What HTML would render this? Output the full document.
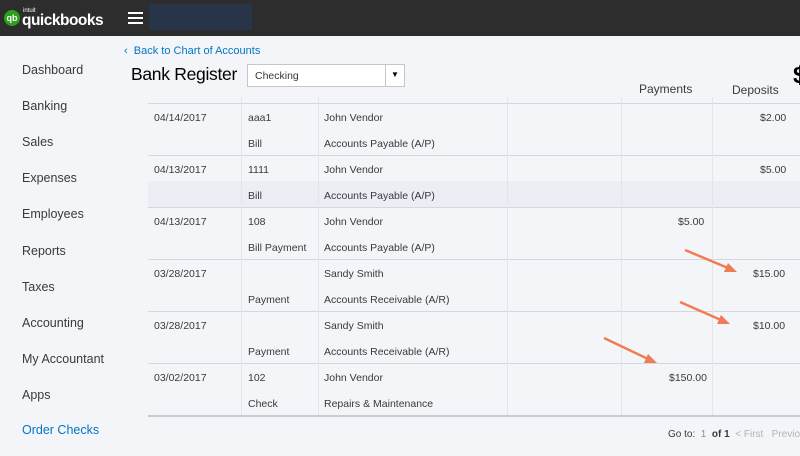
<html><head><style>
body{margin:0;width:800px;height:456px;overflow:hidden;background:#f4f5f8;font-family:"Liberation Sans",sans-serif;position:relative}
.top{position:absolute;left:0;top:0;width:800px;height:36px;background:#2d2d2d}
.a{position:absolute;white-space:nowrap}
.nav{position:absolute;left:22px;font-size:12.5px;color:#393a3d}
.c{position:absolute;font-size:10.5px;color:#393a3d;white-space:nowrap}
.hl{position:absolute;left:148px;width:652px;height:1px;background:#d4d7dc}
.vl{position:absolute;top:97px;width:1px;height:318px;background:#e3e5ea}
</style></head><body>
<div class="top"></div>
<div class="a" style="left:4px;top:10px;width:16px;height:16px;border-radius:50%;background:#2ca01c;color:#fff;font-size:9px;font-weight:bold;text-align:center;line-height:16px">qb</div>
<div class="a" style="left:23px;top:8px;color:#fff;font-size:6px">intuit</div>
<div class="a" style="left:22px;top:12px;color:#fff;font-size:15.5px;font-weight:bold;letter-spacing:-0.5px">quickbooks</div>
<div class="a" style="left:128px;top:12px;width:15px;height:2px;background:#fff;box-shadow:0 5px 0 #fff,0 10px 0 #fff"></div>
<div class="a" style="left:149px;top:4px;width:103px;height:26px;background:#283447"></div>
<div class="a" style="left:124px;top:45px;font-size:11px;color:#0077c5">‹&nbsp; Back to Chart of Accounts</div>
<div class="a" style="left:131px;top:64px;font-size:17.5px;color:#000;letter-spacing:-0.3px">Bank Register</div>
<div class="a" style="left:247px;top:64px;width:158px;height:23px;border:1px solid #c4c6ca;background:#fff;box-sizing:border-box"><span style="position:absolute;left:7px;top:5px;font-size:10.5px;color:#393a3d">Checking</span><span style="position:absolute;left:137px;top:0;width:1px;height:21px;background:#c4c6ca"></span><span style="position:absolute;left:143px;top:5px;font-size:8px">▼</span></div>
<div class="a" style="left:639px;top:82px;font-size:12px;color:#393a3d">Payments</div>
<div class="a" style="left:732px;top:83px;font-size:12px;color:#393a3d">Deposits</div>
<div class="a" style="left:793px;top:62px;font-size:24px;font-weight:bold;color:#000">$</div>
<div class="nav" style="top:63px">Dashboard</div><div class="nav" style="top:99px">Banking</div><div class="nav" style="top:135px">Sales</div><div class="nav" style="top:171px">Expenses</div><div class="nav" style="top:207px">Employees</div><div class="nav" style="top:244px">Reports</div><div class="nav" style="top:280px">Taxes</div><div class="nav" style="top:316px">Accounting</div><div class="nav" style="top:352px">My Accountant</div><div class="nav" style="top:388px">Apps</div><div class="nav" style="top:423px;color:#0077c5">Order Checks</div>
<div class="a" style="left:148px;top:181px;width:652px;height:26px;background:#eceef5"></div>
<div class="hl" style="top:103px"></div><div class="hl" style="top:155px"></div><div class="hl" style="top:207px"></div><div class="hl" style="top:259px"></div><div class="hl" style="top:311px"></div><div class="hl" style="top:363px"></div><div class="hl" style="top:415px;height:2px;background:#c9ccd1"></div>
<div class="vl" style="left:241px"></div><div class="vl" style="left:318px"></div><div class="vl" style="left:507px"></div><div class="vl" style="left:621px"></div><div class="vl" style="left:712px"></div>
<div class="c" style="left:154px;top:112px">04/14/2017</div><div class="c" style="left:248px;top:112px">aaa1</div><div class="c" style="left:324px;top:112px">John Vendor</div><div class="c" style="left:760px;top:112px">$2.00</div>
<div class="c" style="left:248px;top:138px">Bill</div><div class="c" style="left:324px;top:138px">Accounts Payable (A/P)</div>
<div class="c" style="left:154px;top:164px">04/13/2017</div><div class="c" style="left:248px;top:164px">1111</div><div class="c" style="left:324px;top:164px">John Vendor</div><div class="c" style="left:760px;top:164px">$5.00</div>
<div class="c" style="left:248px;top:190px">Bill</div><div class="c" style="left:324px;top:190px">Accounts Payable (A/P)</div>
<div class="c" style="left:154px;top:216px">04/13/2017</div><div class="c" style="left:248px;top:216px">108</div><div class="c" style="left:324px;top:216px">John Vendor</div><div class="c" style="left:678px;top:216px">$5.00</div>
<div class="c" style="left:248px;top:242px">Bill Payment</div><div class="c" style="left:324px;top:242px">Accounts Payable (A/P)</div>
<div class="c" style="left:154px;top:268px">03/28/2017</div><div class="c" style="left:324px;top:268px">Sandy Smith</div><div class="c" style="left:753px;top:268px">$15.00</div>
<div class="c" style="left:248px;top:294px">Payment</div><div class="c" style="left:324px;top:294px">Accounts Receivable (A/R)</div>
<div class="c" style="left:154px;top:320px">03/28/2017</div><div class="c" style="left:324px;top:320px">Sandy Smith</div><div class="c" style="left:753px;top:320px">$10.00</div>
<div class="c" style="left:248px;top:346px">Payment</div><div class="c" style="left:324px;top:346px">Accounts Receivable (A/R)</div>
<div class="c" style="left:154px;top:372px">03/02/2017</div><div class="c" style="left:248px;top:372px">102</div><div class="c" style="left:324px;top:372px">John Vendor</div><div class="c" style="left:669px;top:372px">$150.00</div>
<div class="c" style="left:248px;top:398px">Check</div><div class="c" style="left:324px;top:398px">Repairs &amp; Maintenance</div>
<div class="c" style="left:668px;top:429px;font-size:10px">Go to: <span style="color:#8d9096">&nbsp;1&nbsp;</span> <b>of 1</b> <span style="color:#b0b3b8">&nbsp;&lt; First &nbsp; Previous</span></div>
<svg class="a" style="left:0;top:0" width="800" height="456"><g stroke="#f07c53" stroke-width="2.5" fill="#f07c53">
<line x1="685" y1="250" x2="728" y2="268"/><polygon points="737,272 724,272 728,263" stroke="none"/>
<line x1="680" y1="302" x2="721" y2="320"/><polygon points="730,324 717,324 721,315" stroke="none"/>
<line x1="604" y1="338" x2="648" y2="359"/><polygon points="657,363 644,363 648,354" stroke="none"/>
</g></svg>
</body></html>
